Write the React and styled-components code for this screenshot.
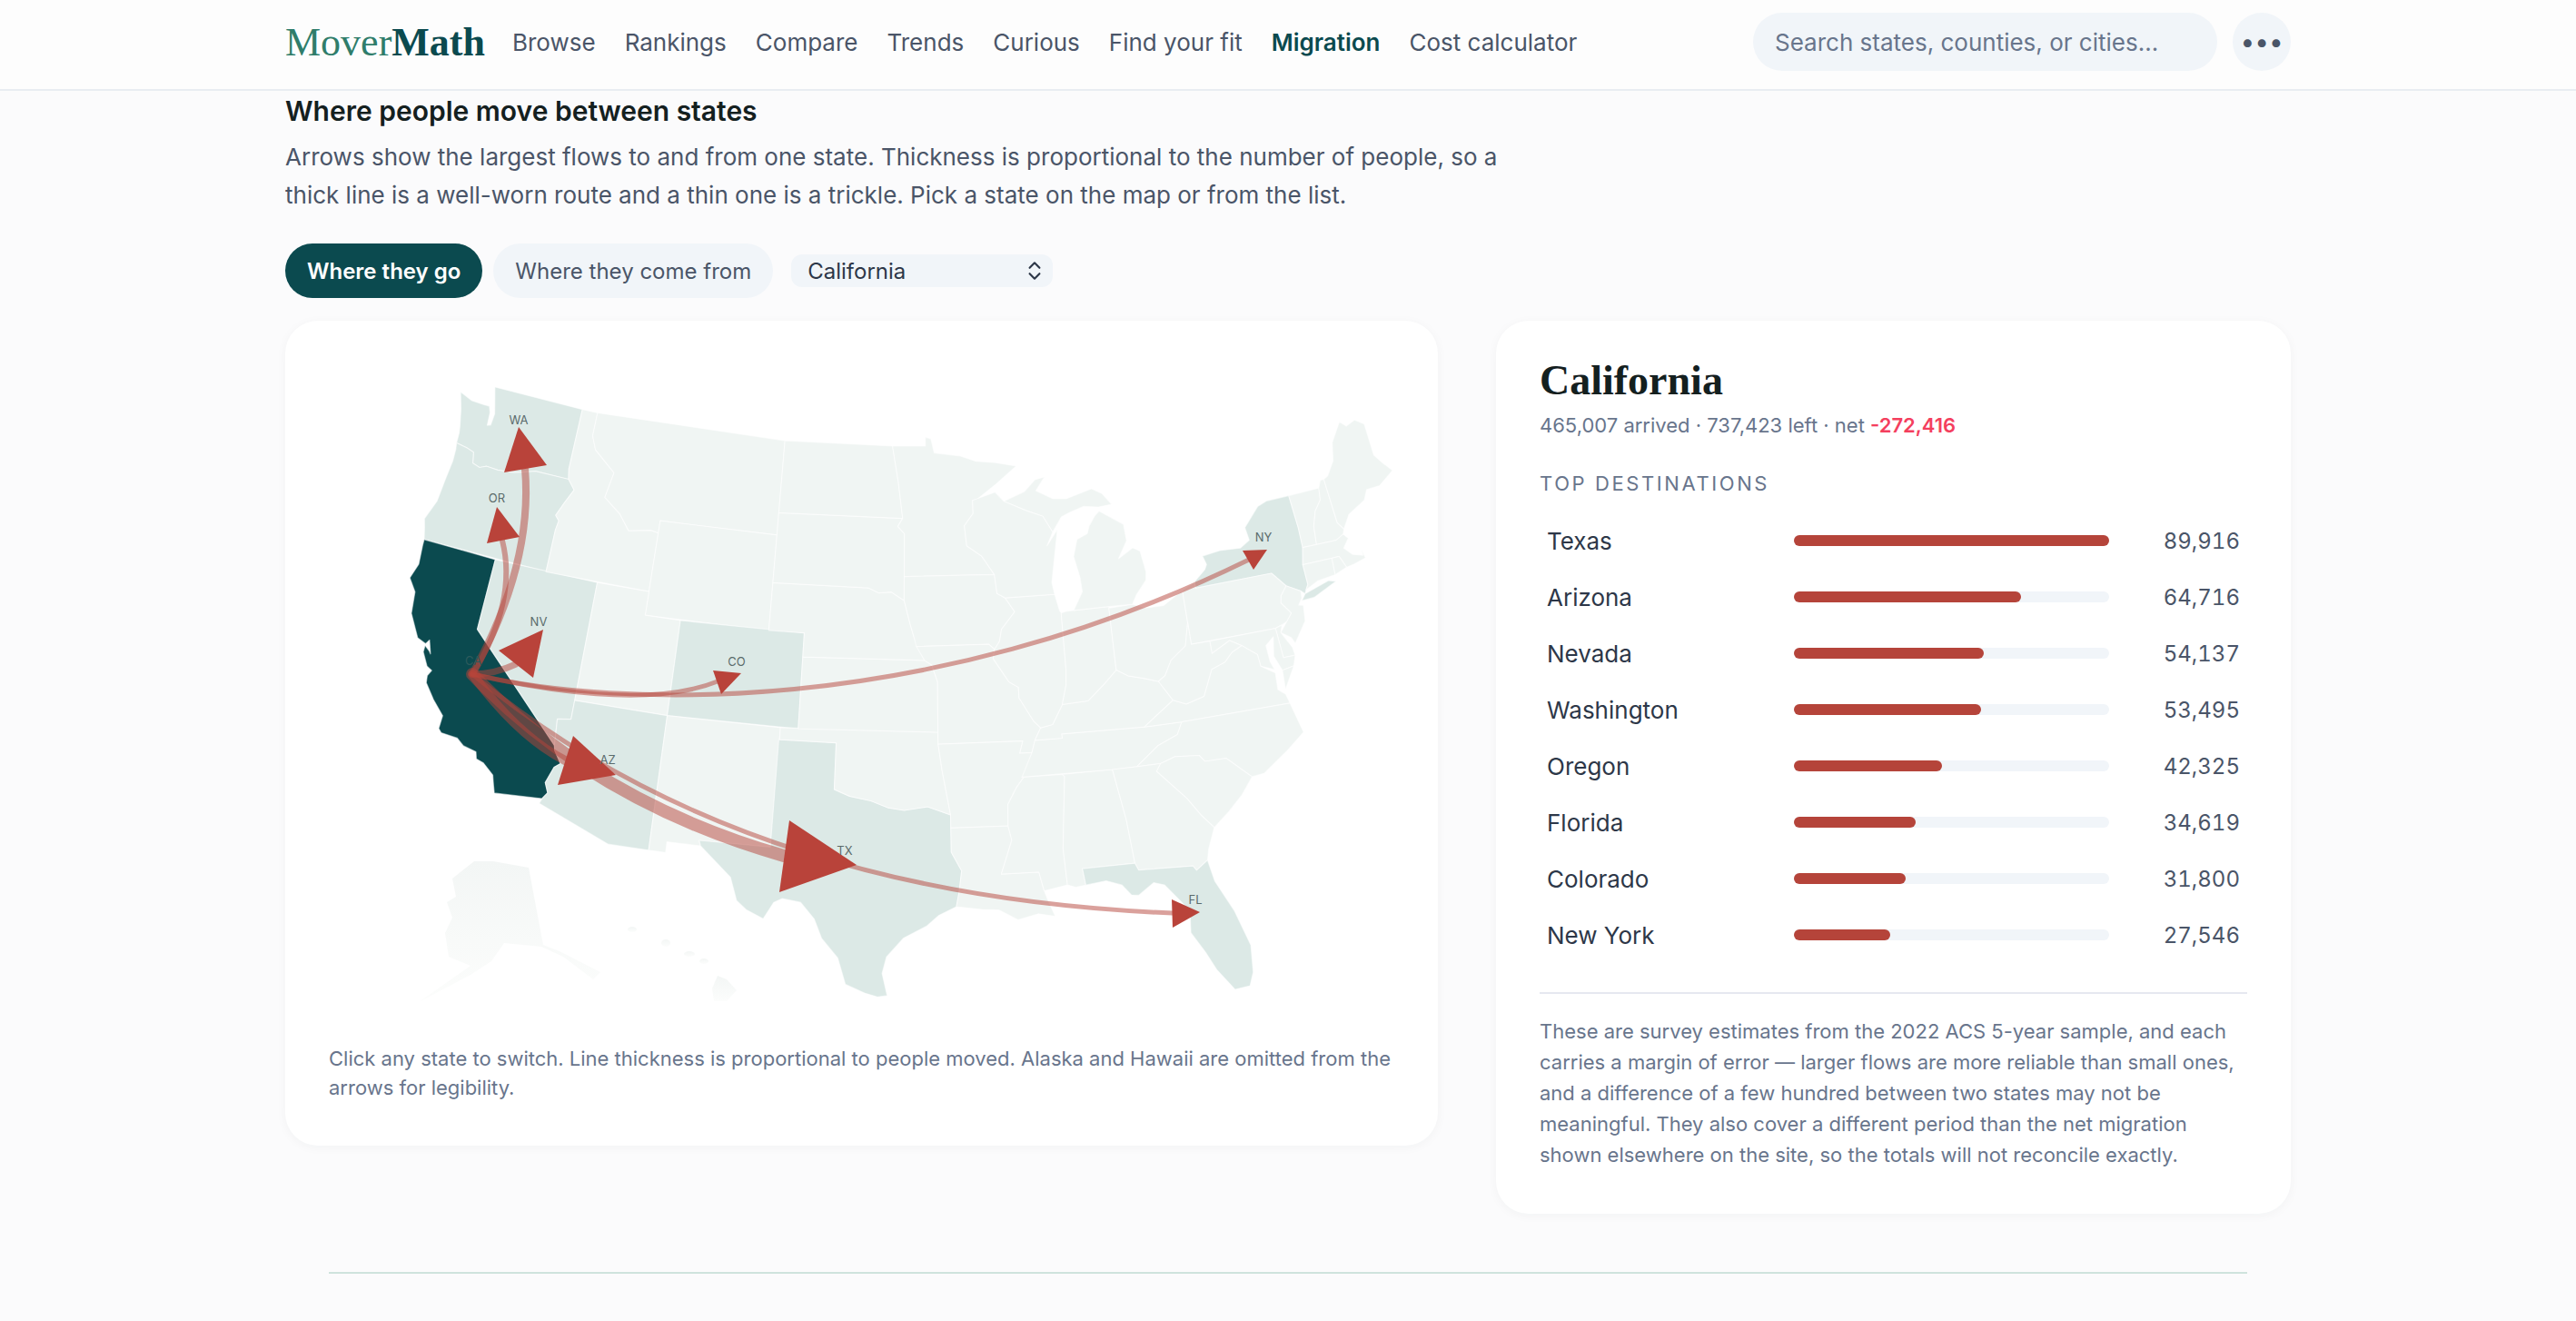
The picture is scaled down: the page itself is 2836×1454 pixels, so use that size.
import React from "react";
import styled, { createGlobalStyle } from "styled-components";
import { ChevronsUpDown } from "lucide-react";

const GlobalStyle = createGlobalStyle`
  * { box-sizing: border-box; }
  body {
    margin: 0;
    background: #fbfbfc;
    font-family: Inter, "Liberation Sans", sans-serif;
    color: #4a5568;
  }
`;

const NavBar = styled.header`
  height: 100px;
  background: #fdfdfd;
  border-bottom: 2px solid #e9edf2;
`;

const NavInner = styled.div`
  width: 2208px;
  height: 92px;
  margin: 0 auto;
  display: flex;
  align-items: center;
`;

const Logo = styled.div`
  font-family: "Liberation Serif", serif;
  font-size: 44px;
  color: #2f7d6b;
  margin-right: 30px;
  span {
    color: #0b4a4f;
    font-weight: 700;
  }
`;

const NavLinks = styled.nav`
  display: flex;
  gap: 32px;
  flex: 1;
`;

const NavLink = styled.a`
  font-size: 26px;
  color: ${(p) => (p.$active ? "#0b4a4f" : "#4a5568")};
  font-weight: ${(p) => (p.$active ? 600 : 400)};
`;

const Search = styled.div`
  width: 511px;
  height: 64px;
  padding: 0 24px;
  border-radius: 32px;
  background: #f1f5f9;
  color: #68758c;
  font-size: 26px;
  display: flex;
  align-items: center;
`;

const MoreButton = styled.div`
  width: 64px;
  height: 64px;
  margin-left: 17px;
  border-radius: 50%;
  background: #f1f5f9;
  color: #4a5568;
  font-size: 28px;
  display: flex;
  align-items: center;
  justify-content: center;
`;

const Page = styled.main`
  width: 2208px;
  margin: 0 auto;
`;

const Title = styled.h2`
  margin: 0;
  padding-top: 2px;
  font-size: 30px;
  line-height: 40px;
  font-weight: 600;
  color: #14201f;
`;

const Lede = styled.p`
  margin: 10px 0 0;
  max-width: 1360px;
  font-size: 26px;
  line-height: 42px;
  color: #4a5568;
`;

const Controls = styled.div`
  display: flex;
  align-items: center;
  gap: 12px;
  margin-top: 32px;
`;

const Toggle = styled.button`
  height: 60px;
  padding: 0 24px;
  border: 0;
  border-radius: 30px;
  font: inherit;
  font-size: 24px;
  font-weight: ${(p) => (p.$active ? 600 : 400)};
  background: ${(p) => (p.$active ? "#0b4a4f" : "#f1f5f9")};
  color: ${(p) => (p.$active ? "#fff" : "#4a5568")};
`;

const Select = styled.div`
  width: 288px;
  height: 36px;
  margin-left: 8px;
  padding: 0 7px 0 18px;
  border-radius: 12px;
  background: #f1f5f9;
  color: #2d3748;
  font-size: 24px;
  display: flex;
  align-items: center;
  justify-content: space-between;
`;

const Columns = styled.div`
  display: grid;
  grid-template-columns: 1.45fr 1fr;
  gap: 64px;
  align-items: start;
  margin-top: 25px;
`;

const Card = styled.section`
  padding: 48px;
  border-radius: 36px;
  background: #fff;
  box-shadow: 0 2px 12px rgba(15, 40, 50, 0.04);
`;

const MapSvg = styled.svg`
  display: block;
  width: 1173px;
  height: 724px;
`;

const MapLabel = styled.text`
  font-size: 13px;
  fill: ${(p) => (p.$dim ? "#2d5a5c" : "#5a6b6b")};
  text-anchor: middle;
  dominant-baseline: middle;
`;

const Caption = styled.p`
  margin: 24px 0 0;
  font-size: 22px;
  line-height: 32px;
  color: #68758c;
`;

const StateName = styled.h3`
  margin: 0;
  font-family: "Liberation Serif", serif;
  font-size: 46px;
  line-height: 36px;
  font-weight: 700;
  color: #14201f;
`;

const Meta = styled.p`
  margin: 13px 0 0;
  font-size: 22px;
  line-height: 36px;
  color: #68758c;
  b {
    font-weight: 600;
    color: #f43f5e;
  }
`;

const SectionLabel = styled.div`
  margin-top: 30px;
  font-size: 22px;
  line-height: 32px;
  letter-spacing: 2.6px;
  text-transform: uppercase;
  color: #68758c;
`;

const Rows = styled.div`
  margin-top: 16px;
`;

const Row = styled.div`
  height: 62px;
  padding: 0 8px;
  display: grid;
  grid-template-columns: 272px 347px 1fr;
  align-items: center;
`;

const RowName = styled.div`
  font-size: 26px;
  color: #2d3748;
`;

const Track = styled.div`
  height: 12px;
  border-radius: 6px;
  background: #f1f5f9;
`;

const Fill = styled.div`
  height: 100%;
  border-radius: 6px;
  background: #b5443a;
`;

const RowValue = styled.div`
  font-size: 24px;
  font-variant-numeric: tabular-nums;
  color: #4a5568;
  text-align: right;
`;

const Note = styled.p`
  margin: 32px 0 0;
  padding-top: 24px;
  border-top: 2px solid #e6e8f0;
  font-size: 22px;
  line-height: 34px;
  color: #68758c;
`;

const FooterRule = styled.div`
  margin: 64px 48px 0;
  height: 2px;
  background: #cfe3dd;
`;

const links = ["Browse", "Rankings", "Compare", "Trends", "Curious", "Find your fit", "Migration", "Cost calculator"];

const flows = [
  ["Texas", 89916],
  ["Arizona", 64716],
  ["Nevada", 54137],
  ["Washington", 53495],
  ["Oregon", 42325],
  ["Florida", 34619],
  ["Colorado", 31800],
  ["New York", 27546],
];

// state outlines as lon,lat lists, projected with albers below
const states = {
  WA: "-124.73,48.38 -123.9,48.17 -123.1,48.15 -122.75,48.15 -122.6,47.9 -122.55,47.35 -122.35,47.4 -122.3,47.9 -122.5,48.4 -122.75,49 -117.03,49 -117.04,46.42 -116.92,45.99 -118.98,46 -119.3,45.93 -120.2,45.73 -121.2,45.65 -121.9,45.68 -122.3,45.55 -122.76,45.65 -122.9,46.1 -123.4,46.2 -124.05,46.27 -124.07,46.7 -124.15,47 -124.4,47.7",
  OR: "-124.05,46.27 -123.4,46.2 -122.9,46.1 -122.76,45.65 -122.3,45.55 -121.9,45.68 -121.2,45.65 -120.2,45.73 -119.3,45.93 -118.98,46 -116.92,45.99 -116.46,45.6 -116.85,45 -117.2,44.4 -116.95,44.2 -117.03,43.8 -117.03,42 -124.21,42 -124.4,42.5 -124.55,42.84 -124.15,43.7 -124.05,44.7 -123.95,45.5 -123.98,46",
  CA: "-124.21,42 -120,42 -120,39 -114.63,35 -114.57,34.8 -114.14,34.3 -114.43,34.1 -114.72,33.4 -114.5,33 -114.72,32.72 -117.12,32.53 -117.25,32.85 -117.4,33.25 -118,33.65 -118.4,33.75 -118.5,34.03 -119.2,34.15 -119.6,34.4 -120.47,34.45 -120.65,34.6 -120.62,35.15 -121.3,35.7 -121.9,36.3 -121.95,36.6 -121.8,36.85 -122.1,36.97 -122.5,37.5 -122.5,37.78 -122.2,37.6 -122.1,37.5 -122.35,38.05 -122.5,37.85 -123,38 -123.7,38.9 -123.85,39.8 -124.35,40.3 -124.1,40.95 -124.2,41.75",
  NV: "-120,42 -114.04,42 -114.04,36.2 -114.75,36.1 -114.63,35 -120,39",
  ID: "-117.03,42 -111.05,42 -111.05,44.48 -111.5,44.55 -112.8,44.37 -113.5,45 -114.56,45.56 -114.3,46.65 -115.7,47.45 -116.05,48 -116.05,49 -117.03,49 -117.04,46.42 -116.92,45.99 -116.46,45.6 -116.85,45 -117.2,44.4 -116.95,44.2 -117.03,43.8",
  MT: "-116.05,49 -104.05,49 -104.05,45 -111.05,45 -111.05,44.48 -111.5,44.55 -112.8,44.37 -113.5,45 -114.56,45.56 -114.3,46.65 -115.7,47.45 -116.05,48",
  WY: "-111.05,45 -104.05,45 -104.05,41 -111.05,41",
  UT: "-114.04,42 -111.05,42 -111.05,41 -109.05,41 -109.05,37 -114.04,37",
  CO: "-109.05,41 -102.05,41 -102.05,37 -109.05,37",
  AZ: "-114.04,37 -109.05,37 -109.05,31.33 -111.07,31.33 -114.81,32.5 -114.72,32.72 -114.5,33 -114.72,33.4 -114.43,34.1 -114.14,34.3 -114.57,34.8 -114.63,35 -114.75,36.1 -114.04,36.2",
  NM: "-109.05,37 -103,37 -103.04,32 -106.62,32 -106.53,31.78 -108.21,31.78 -108.21,31.33 -109.05,31.33",
  TX: "-103.04,36.5 -100,36.5 -100,34.56 -99.2,34.3 -98.1,34.13 -97.2,33.85 -96.4,33.75 -95.2,33.9 -94.04,33.55 -94.04,31.99 -93.55,31.2 -93.7,30.3 -93.85,29.7 -94.7,29.35 -95.3,28.9 -96.4,28.4 -97.2,27.6 -97.4,26.9 -97.15,25.96 -97.6,25.9 -98.2,26.05 -99.1,26.4 -99.5,27.5 -100.3,28.3 -100.7,29.1 -101.4,29.77 -102.3,29.88 -102.7,29.7 -103.15,28.98 -104,29.3 -104.5,29.65 -104.9,30.6 -106.53,31.78 -106.62,32 -103.06,32",
  OK: "-103,37 -94.62,37 -94.62,36.5 -94.43,35.4 -94.04,33.55 -95.2,33.9 -96.4,33.75 -97.2,33.85 -98.1,34.13 -99.2,34.3 -100,34.56 -100,36.5 -103,36.5",
  KS: "-102.05,40 -95.3,40 -94.9,39.8 -94.6,39.1 -94.62,37 -102.05,37",
  NE: "-104.05,43 -98.5,43 -97.9,42.8 -97.2,42.85 -96.45,42.5 -96.1,41.5 -95.9,41 -95.3,40 -102.05,40 -102.05,41 -104.05,41",
  SD: "-104.05,45.94 -96.56,45.94 -96.85,45.6 -96.45,45.3 -96.45,42.5 -97.2,42.85 -97.9,42.8 -98.5,43 -104.05,43",
  ND: "-104.05,49 -97.23,49 -96.85,47.5 -96.56,45.94 -104.05,45.94",
  MN: "-97.23,49 -95.15,49 -95.15,49.38 -94.8,49.3 -94.6,48.7 -93,48.55 -92,48.3 -90.8,48.2 -89.5,48 -90.8,47.3 -92,46.7 -92.3,46.65 -92.3,46.1 -92.85,45.6 -92.75,44.75 -91.9,44.3 -91.2,43.5 -96.45,43.5 -96.45,45.3 -96.85,45.6 -96.56,45.94 -96.85,47.5",
  IA: "-96.45,43.5 -91.2,43.5 -91.1,42.7 -90.65,42.5 -90.15,41.9 -90.95,41.2 -91.1,40.7 -91.4,40.38 -91.7,40.6 -95.75,40.58 -95.9,41 -96.1,41.5 -96.45,42.5",
  MO: "-95.75,40.58 -91.7,40.6 -91.4,40.38 -91.5,40 -90.7,39 -90.2,38.75 -90.2,38.3 -89.5,37.3 -89.15,37 -89.5,36.5 -89.7,36 -90.35,36 -90.15,36.5 -94.62,36.5 -94.62,37 -94.6,39.1 -94.9,39.8 -95.3,40",
  AR: "-94.62,36.5 -90.15,36.5 -90.35,36 -89.7,36 -90.1,35.1 -90.6,34.6 -91.1,33.9 -91.15,33 -94.04,33 -94.04,33.55 -94.43,35.4",
  LA: "-94.04,33 -91.15,33 -91,32.4 -91.6,31 -89.75,31 -89.55,30.2 -89.4,29.8 -89.1,29.1 -89.9,29.25 -90.9,29.05 -91.8,29.5 -92.6,29.55 -93.85,29.7 -93.7,30.3 -93.55,31.2 -94.04,31.99",
  MS: "-91.15,33 -91.1,33.9 -90.6,34.6 -90.1,35.1 -90.3,35 -88.2,35 -88.1,34.9 -88.47,31.9 -88.4,30.37 -89.55,30.2 -89.75,31 -91.6,31 -91,32.4",
  AL: "-88.2,35 -85.6,35 -85.18,32.85 -85,31 -87.6,31 -87.5,30.3 -88,30.25 -88.4,30.37 -88.47,31.9 -88.1,34.9",
  TN: "-90.3,35 -89.7,36 -89.5,36.5 -88.05,36.5 -88.07,36.68 -83.68,36.6 -81.68,36.59 -82,36.1 -83.1,35.75 -84.32,35 -85.6,35",
  KY: "-89.5,36.5 -89.15,37 -88.5,37.1 -87.9,37.9 -86.5,37.95 -85.5,38.6 -84.8,39.1 -84.2,38.8 -83.3,38.6 -82.6,38.4 -81.97,37.54 -83.68,36.6 -88.07,36.68 -88.05,36.5",
  IL: "-90.65,42.5 -87.8,42.5 -87.6,41.8 -87.52,41.7 -87.53,39.35 -87.6,38.7 -87.9,37.9 -88.5,37.1 -89.15,37 -89.5,37.3 -90.2,38.3 -90.2,38.75 -90.7,39 -91.5,40 -91.4,40.38 -91.1,40.7 -90.95,41.2 -90.15,41.9",
  IN: "-87.52,41.7 -87.2,41.75 -86.8,41.76 -84.8,41.76 -84.8,39.1 -85.5,38.6 -86.5,37.95 -87.9,37.9 -87.6,38.7 -87.53,39.35",
  OH: "-84.8,41.7 -83.45,41.73 -82.7,41.5 -81.7,41.5 -80.52,42 -80.52,40.64 -80.85,39.7 -81.75,39.2 -82.2,38.6 -82.6,38.4 -83.3,38.6 -84.2,38.8 -84.8,39.1",
  MIL: "-86.8,41.76 -84.8,41.76 -83.45,41.73 -83.15,42.1 -82.5,42.65 -82.42,43 -82.6,43.9 -83,44.07 -83.9,43.7 -83.3,44.4 -83.35,45.1 -84.7,45.78 -85,45.6 -85.4,45.2 -85.55,44.9 -86.2,44.7 -86.5,44 -86.25,43.1 -86.2,42.5",
  MIU: "-90.4,46.55 -89.1,46.9 -88.4,47.37 -87.8,47.45 -88.4,46.9 -87.4,46.5 -86.6,46.45 -85,46.75 -84.4,46.5 -83.9,46 -84.7,45.95 -85.6,46.05 -86.5,45.85 -87,45.7 -87.6,45.1 -88.1,45.8 -89.1,46.1",
  WI: "-92.3,46.65 -90.9,46.95 -90.4,46.55 -89.1,46.1 -88.1,45.8 -87.6,45.1 -88,44.55 -87.3,45.2 -87.55,44.3 -87.9,43 -87.8,42.5 -90.65,42.5 -91.1,42.7 -91.2,43.5 -91.9,44.3 -92.75,44.75 -92.85,45.6 -92.3,46.1",
  NY: "-79.76,42.27 -79.05,42.7 -78.9,42.9 -79.05,43.27 -78,43.37 -76.8,43.3 -76.2,43.55 -76.3,44.1 -75.3,44.85 -74.7,45 -73.35,45 -73.25,43.6 -73.27,42.75 -73.5,42.05 -73.48,41.2 -73.65,41 -73.75,40.85 -73.95,41 -74.7,41.36 -75.35,42 -79.76,42",
  LI: "-74.02,40.6 -73.75,40.85 -72.3,41.15 -71.9,41.05 -73.3,40.62",
  VT: "-73.35,45 -71.5,45 -71.6,44.5 -72.05,44.1 -72.35,43.5 -72.46,42.73 -73.27,42.75 -73.25,43.6",
  NH: "-71.5,45 -71.3,45.3 -71.08,45.3 -70.98,43.4 -70.7,43.07 -70.82,42.87 -71.3,42.7 -72.46,42.73 -72.35,43.5 -72.05,44.1 -71.6,44.5",
  ME: "-71.08,45.3 -70.8,45.4 -70.25,45.95 -70,46.7 -69.23,47.46 -68.9,47.2 -68.3,47.35 -67.8,47.07 -67.8,45.7 -67.45,45.3 -67,44.85 -68,44.4 -68.8,44.4 -69.1,44 -70.2,43.6 -70.7,43.07 -70.98,43.4",
  MA: "-73.5,42.05 -73.27,42.75 -71.3,42.7 -70.82,42.87 -70.6,42.65 -71,42.3 -70.6,41.95 -70.05,41.8 -70.05,42.05 -69.95,41.67 -70.65,41.55 -71.12,41.5 -71.38,42.02 -71.8,42.02",
  CT: "-73.5,42.05 -71.8,42.02 -71.85,41.32 -72.9,41.25 -73.65,41 -73.48,41.2",
  RI: "-71.8,42.02 -71.38,42.02 -71.12,41.5 -71.85,41.32",
  NJ: "-74.7,41.36 -73.95,41 -74,40.7 -74.25,40.45 -74,40.4 -74.1,39.75 -74.9,38.93 -75.05,39.2 -75.55,39.5 -75.1,39.9 -74.75,40.2 -75.2,40.7 -75.1,41",
  PA: "-80.52,42 -79.76,42.27 -79.76,42 -75.35,42 -74.7,41.36 -75.1,41 -75.2,40.7 -74.75,40.2 -75.1,39.9 -75.4,39.8 -75.79,39.72 -80.52,39.72",
  DE: "-75.79,39.72 -75.4,39.8 -75.55,39.5 -75.1,38.8 -75.05,38.45 -75.7,38.46",
  MD: "-79.48,39.72 -75.79,39.72 -75.7,38.46 -75.05,38.45 -75.25,38.03 -75.9,37.95 -76.2,38.6 -76,39.4 -76.5,39.1 -76.45,38.4 -76.3,38.05 -77,38.3 -77.05,38.8 -77.5,39.1 -77.8,39.3 -78.4,39.6 -79.48,39.2",
  VA: "-83.68,36.6 -81.68,36.59 -75.87,36.55 -76,36.95 -76.35,37.2 -76.3,37.9 -77,38.3 -77.05,38.8 -77.5,39.1 -77.8,39.3 -78.4,39.1 -78.87,38.75 -79.65,38.55 -80.3,37.5 -81.3,37.3 -81.97,37.54",
  VAE: "-75.9,37.95 -75.25,38.03 -75.95,37.15",
  WV: "-82.6,38.4 -82.2,38.6 -81.75,39.2 -80.85,39.7 -80.52,40.64 -80.52,39.72 -79.48,39.72 -79.48,39.2 -78.4,39.6 -77.8,39.3 -78.4,39.1 -78.87,38.75 -79.65,38.55 -80.3,37.5 -81.3,37.3 -81.97,37.54",
  NC: "-84.32,35 -83.1,35.75 -82,36.1 -81.68,36.59 -75.87,36.55 -75.5,35.25 -76.5,34.65 -77.9,33.9 -78.55,33.85 -79.7,34.8 -80.8,34.82 -81.05,35.1 -82.3,35.2 -83.1,35",
  SC: "-83.1,35 -82.3,35.2 -81.05,35.1 -80.8,34.82 -79.7,34.8 -78.55,33.85 -79.2,33.2 -80,32.6 -80.87,32.03 -81.4,32.6 -82,33.4 -83.35,34.7",
  GA: "-85.6,35 -84.32,35 -83.1,35 -83.35,34.7 -82,33.4 -81.4,32.6 -80.87,32.03 -81.3,31.2 -81.45,30.72 -82.05,30.37 -82.2,30.57 -84.86,30.7 -85,31 -85.18,32.85",
  FL: "-87.6,31 -85,31 -84.86,30.7 -82.2,30.57 -82.05,30.37 -81.45,30.72 -81.25,29.8 -80.55,28.45 -80.05,26.9 -80.15,25.75 -80.4,25.2 -81.1,25.15 -81.8,26.1 -82.2,26.9 -82.75,27.8 -82.65,28.7 -83,29.15 -83.7,29.95 -84.2,30.1 -85,29.65 -85.35,29.7 -85.75,30.15 -86.5,30.4 -87.5,30.3",
};

const highlighted = ["WA", "OR", "NV", "AZ", "CO", "TX", "FL", "NY", "LI"];

const rad = Math.PI / 180;
const n = (Math.sin(29.5 * rad) + Math.sin(45.5 * rad)) / 2;
const c = Math.cos(29.5 * rad) ** 2 + 2 * n * Math.sin(29.5 * rad);
const rho = (lat) => Math.sqrt(c - 2 * n * Math.sin(lat * rad)) / n;

function project(lon, lat) {
  const t = n * (lon + 96) * rad;
  const r = rho(lat);
  return [1004 + 1500 * r * Math.sin(t), 793 - 1500 * (rho(37.5) - r * Math.cos(t))];
}

function statePath(coords) {
  const pts = coords.split(" ").map((pair) => {
    const [lon, lat] = pair.split(",").map(Number);
    return project(lon, lat).map((v) => v.toFixed(1)).join(" ");
  });
  return "M" + pts.join("L") + "Z";
}

const stateFill = (code) => {
  if (code === "CA") return "#0b4a4f";
  return highlighted.includes(code) ? "#dce9e6" : "#f0f5f3";
};

const arrows = [
  { d: "M520 742Q587 621 578 516", w: 8, head: "571,470 602,512 555,520" },
  { d: "M520 742Q570 662 553 595", w: 6, head: "547,558 572,591 536,598" },
  { d: "M520 742Q545 742 568 731", w: 7, head: "549,716 598,693 587,746" },
  { d: "M520 742Q705 784 790 750", w: 5, head: "785,738 816,741 794,764" },
  { d: "M520 742C680 780 1020 790 1375 616", w: 5, head: "1368,606 1395,605 1380,627" },
  { d: "M520 742Q570 810 622 837", w: 10, head: "631,810 678,853 614,864" },
  { d: "M520 742Q654 882 863 942", w: 14, head: "869,903 943,952 858,982" },
  { d: "M520 742Q814 986 1291 1005", w: 5, head: "1290,990 1321,1004 1291,1021" },
];

const labels = [
  ["WA", 571, 463],
  ["OR", 547, 549],
  ["CA", 521, 728],
  ["NV", 593, 685],
  ["CO", 811, 729],
  ["AZ", 669, 837],
  ["TX", 930, 937],
  ["NY", 1391, 592],
  ["FL", 1316, 991],
];

function FlowMap() {
  return (
    <MapSvg viewBox="362 401 1173 724">
      <defs>
        <linearGradient id="inset" x1="0" y1="0" x2="0" y2="1">
          <stop offset="0" stopColor="#f3f6f5" />
          <stop offset="1" stopColor="#fcfdfc" />
        </linearGradient>
      </defs>
      <g stroke="#fff" strokeWidth="1.2" strokeOpacity="0.55" strokeLinejoin="round">
        {Object.keys(states).map((code) => (
          <path key={code} d={statePath(states[code])} fill={stateFill(code)} />
        ))}
      </g>
      <g fill="url(#inset)">
        <path d="M522 948L543 948L582 955L598 1040L616 1047L661 1070L653 1078L620 1053L596 1042L555 1038L541 1058L518 1073L461 1103L498 1077L518 1063L494 1053L490 1027L498 1010L492 993L502 987L498 967Z" />
        <ellipse cx="696" cy="1023" rx="5" ry="3" />
        <ellipse cx="733" cy="1038" rx="5" ry="4" />
        <ellipse cx="759" cy="1050" rx="6" ry="3" />
        <ellipse cx="775" cy="1058" rx="5" ry="3" />
        <path d="M790 1074L800 1078L811 1090L800 1102L786 1102L784 1088Z" />
      </g>
      {arrows.map((a) => (
        <path key={a.d} d={a.d} fill="none" stroke="#b5443a" strokeOpacity="0.5" strokeWidth={a.w} strokeLinecap="round" />
      ))}
      {arrows.map((a) => (
        <polygon key={a.head} points={a.head} fill="#b9433a" />
      ))}
      {labels.map(([text, x, y]) => (
        <MapLabel key={text} x={x} y={y} $dim={text === "CA"}>{text}</MapLabel>
      ))}
    </MapSvg>
  );
}

export default function App() {
  return (
    <>
      <GlobalStyle />
      <NavBar>
        <NavInner>
          <Logo>Mover<span>Math</span></Logo>
          <NavLinks>
            {links.map((l) => (
              <NavLink key={l} $active={l === "Migration"}>{l}</NavLink>
            ))}
          </NavLinks>
          <Search>Search states, counties, or cities...</Search>
          <MoreButton>•••</MoreButton>
        </NavInner>
      </NavBar>
      <Page>
        <Title>Where people move between states</Title>
        <Lede>
          Arrows show the largest flows to and from one state. Thickness is proportional to the number of people, so a thick line is a well-worn route and a thin one is a trickle. Pick a state on the map or from the list.
        </Lede>
        <Controls>
          <Toggle $active>Where they go</Toggle>
          <Toggle>Where they come from</Toggle>
          <Select>
            California
            <ChevronsUpDown size={26} strokeWidth={2} />
          </Select>
        </Controls>
        <Columns>
          <Card>
            <FlowMap />
            <Caption>
              Click any state to switch. Line thickness is proportional to people moved. Alaska and Hawaii are omitted from the arrows for legibility.
            </Caption>
          </Card>
          <Card>
            <StateName>California</StateName>
            <Meta>465,007 arrived · 737,423 left · net <b>-272,416</b></Meta>
            <SectionLabel>Top destinations</SectionLabel>
            <Rows>
              {flows.map(([name, count]) => (
                <Row key={name}>
                  <RowName>{name}</RowName>
                  <Track>
                    <Fill style={{ width: `${(count / flows[0][1]) * 100}%` }} />
                  </Track>
                  <RowValue>{count.toLocaleString("en-US")}</RowValue>
                </Row>
              ))}
            </Rows>
            <Note>
              These are survey estimates from the 2022 ACS 5-year sample, and each carries a margin of error — larger flows are more reliable than small ones, and a difference of a few hundred between two states may not be meaningful. They also cover a different period than the net migration shown elsewhere on the site, so the totals will not reconcile exactly.
            </Note>
          </Card>
        </Columns>
        <FooterRule />
      </Page>
    </>
  );
}
